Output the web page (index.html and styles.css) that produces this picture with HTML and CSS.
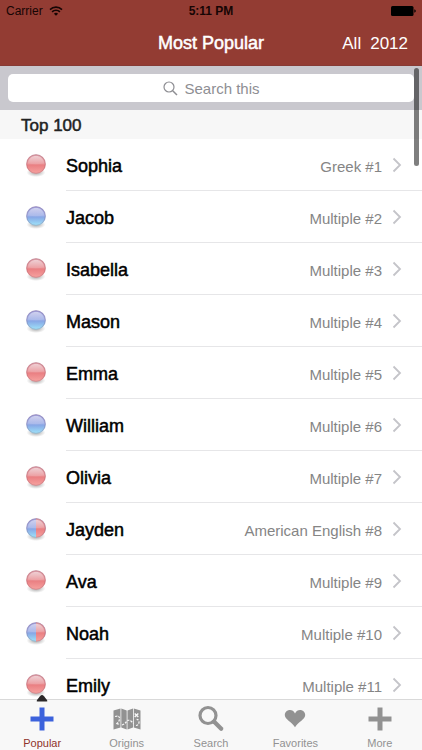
FILE: index.html
```html
<!DOCTYPE html>
<html lang="en">
<head>
<meta charset="utf-8">
<meta name="viewport" content="width=device-width, initial-scale=1">
<title>Most Popular</title>
<link rel="stylesheet" href="styles.css">
</head>
<body>
<svg class="defs" aria-hidden="true">
  <defs>
    <linearGradient id="pink" x1="0" y1="0" x2="0" y2="1">
      <stop offset="0" stop-color="#dda0aa"/><stop offset=".48" stop-color="#ea9498"/>
      <stop offset=".56" stop-color="#ea8083"/><stop offset="1" stop-color="#f7a3a0"/>
    </linearGradient>
    <linearGradient id="blue" x1="0" y1="0" x2="0" y2="1">
      <stop offset="0" stop-color="#a0a0dc"/><stop offset=".48" stop-color="#9fb0e8"/>
      <stop offset=".56" stop-color="#88a8e6"/><stop offset="1" stop-color="#9fe6fa"/>
    </linearGradient>
    <linearGradient id="shine" x1="0" y1="0" x2="0" y2="1">
      <stop offset="0" stop-color="#fff" stop-opacity=".5"/><stop offset="1" stop-color="#fff" stop-opacity=".1"/>
    </linearGradient>
    <radialGradient id="shade">
      <stop offset="0" stop-color="#555" stop-opacity=".6"/><stop offset="1" stop-color="#777" stop-opacity="0"/>
    </radialGradient>
    <g id="gloss">
      <circle cx="12" cy="12" r="9.300" fill="none" stroke="#8a5870" stroke-opacity=".28"/>
      <path d="M4 11.500C4 1.500 20 1.500 20 11.500Q12 13 4 11.500Z" fill="url(#shine)"/>
    </g>
    <symbol id="girl" viewBox="0 0 24 26">
      <ellipse cx="12" cy="20.500" rx="9.500" ry="4.500" fill="url(#shade)"/>
      <circle cx="12" cy="12" r="9.800" fill="url(#pink)"/><use href="#gloss"/>
    </symbol>
    <symbol id="boy" viewBox="0 0 24 26">
      <ellipse cx="12" cy="20.500" rx="9.500" ry="4.500" fill="url(#shade)"/>
      <circle cx="12" cy="12" r="9.800" fill="url(#blue)"/><use href="#gloss"/>
    </symbol>
    <symbol id="both" viewBox="0 0 24 26">
      <ellipse cx="12" cy="20.500" rx="9.500" ry="4.500" fill="url(#shade)"/>
      <circle cx="12" cy="12" r="9.800" fill="url(#blue)"/>
      <path d="M12 2.200a9.800 9.800 0 0 1 0 19.600Z" fill="url(#pink)"/><use href="#gloss"/>
    </symbol>
    <symbol id="chevron" viewBox="0 0 10 16"><path d="M1.500 1.500 8 8l-6.500 6.500" fill="none" stroke="#c4c4c9" stroke-width="1.800"/></symbol>
    <symbol id="plus" viewBox="0 0 24 24"><path d="M9.500.500h5v9h9v5h-9v9h-5v-9h-9v-5h9Z" fill="currentColor"/></symbol>
  </defs>
</svg>

<header class="top">
  <div class="status">
    <span class="carrier">Carrier
      <svg width="14" height="10" viewBox="0 0 14 10" fill="none" stroke="#160504" stroke-width="1.600"><path d="M1 3.600a8.600 8.600 0 0 1 12 0M3.100 5.900a5.600 5.600 0 0 1 7.800 0"/><path d="M7 9.800 4.900 7.700a3 3 0 0 1 4.200 0Z" fill="#160504" stroke="none"/></svg>
    </span>
    <span class="clock">5:11 PM</span>
    <svg class="battery" width="25" height="10" viewBox="0 0 25 10"><rect width="22.500" height="10" rx="1.500"/><path d="M23.300 3.300q1.500.4 1.500 1.700t-1.500 1.700Z"/></svg>
  </div>
  <div class="nav">
    <h1>Most Popular</h1>
    <div class="actions"><button type="button">All</button><button type="button">2012</button></div>
  </div>
</header>

<main class="content">
  <div class="scroller">
    <form class="search" role="search">
      <input type="text" placeholder="Search this" aria-label="Search this">
      <svg class="lens" width="15" height="15" viewBox="0 0 15 15" fill="none" stroke="#8e8e93" stroke-width="1.200"><circle cx="6" cy="6" r="5"/><path d="m9.700 9.700 4.300 4.300" stroke-width="1.500"/></svg>
    </form>
    <h2>Top 100</h2>
    <ul class="names">
      <li><a href="#sophia"><svg class="ball"><use href="#girl"/></svg><span class="row"><span class="text"><b>Sophia</b><span>Greek #1</span></span><svg class="chevron"><use href="#chevron"/></svg></span></a></li>
      <li><a href="#jacob"><svg class="ball"><use href="#boy"/></svg><span class="row"><span class="text"><b>Jacob</b><span>Multiple #2</span></span><svg class="chevron"><use href="#chevron"/></svg></span></a></li>
      <li><a href="#isabella"><svg class="ball"><use href="#girl"/></svg><span class="row"><span class="text"><b>Isabella</b><span>Multiple #3</span></span><svg class="chevron"><use href="#chevron"/></svg></span></a></li>
      <li><a href="#mason"><svg class="ball"><use href="#boy"/></svg><span class="row"><span class="text"><b>Mason</b><span>Multiple #4</span></span><svg class="chevron"><use href="#chevron"/></svg></span></a></li>
      <li><a href="#emma"><svg class="ball"><use href="#girl"/></svg><span class="row"><span class="text"><b>Emma</b><span>Multiple #5</span></span><svg class="chevron"><use href="#chevron"/></svg></span></a></li>
      <li><a href="#william"><svg class="ball"><use href="#boy"/></svg><span class="row"><span class="text"><b>William</b><span>Multiple #6</span></span><svg class="chevron"><use href="#chevron"/></svg></span></a></li>
      <li><a href="#olivia"><svg class="ball"><use href="#girl"/></svg><span class="row"><span class="text"><b>Olivia</b><span>Multiple #7</span></span><svg class="chevron"><use href="#chevron"/></svg></span></a></li>
      <li><a href="#jayden"><svg class="ball"><use href="#both"/></svg><span class="row"><span class="text"><b>Jayden</b><span>American English #8</span></span><svg class="chevron"><use href="#chevron"/></svg></span></a></li>
      <li><a href="#ava"><svg class="ball"><use href="#girl"/></svg><span class="row"><span class="text"><b>Ava</b><span>Multiple #9</span></span><svg class="chevron"><use href="#chevron"/></svg></span></a></li>
      <li><a href="#noah"><svg class="ball"><use href="#both"/></svg><span class="row"><span class="text"><b>Noah</b><span>Multiple #10</span></span><svg class="chevron"><use href="#chevron"/></svg></span></a></li>
      <li><a href="#emily"><svg class="ball"><use href="#girl"/></svg><span class="row"><span class="text"><b>Emily</b><span>Multiple #11</span></span><svg class="chevron"><use href="#chevron"/></svg></span></a></li>
    </ul>
  </div>
  <div class="thumb"></div>
</main>

<nav class="tabs">
  <a class="tab active" href="#popular"><svg class="pointer" width="12" height="7" viewBox="0 0 12 7"><path d="M6 0Q7 0 8 1.200L11 5q1 1.500-.5 1.500h-9Q0 6.500 1 5l3-3.800Q5 0 6 0Z" fill="#2b2829"/></svg><svg class="icon"><use href="#plus"/></svg>Popular</a>
  <a class="tab" href="#origins"><svg class="icon map" viewBox="0 0 28 24"><path d="M.5 3.500 7.500 1.500v19L.5 22.500ZM8.300 1.500l5.400 2v19l-5.400-2ZM14.500 3.500l5.500-2v19l-5.500 2ZM20.800 1.500l6.700 2v19l-6.700-2Z" fill="currentColor"/><path d="M2 9.500q4.500-1.500 4.500 2T3 17h4M9 18q3-1 4.500-3.500t5 0l2 2M23 18.500q3-.5 3-3.500t-3.500-2.500" fill="none" stroke="#f8f8f8" stroke-width="1.200" stroke-dasharray="2.200 1.200"/><path d="m21.700 6.500 3.600 3.600m0-3.600-3.600 3.600" stroke="#f8f8f8" stroke-width="1.400"/></svg>Origins</a>
  <a class="tab" href="#search"><svg class="icon" viewBox="0 0 24 24" fill="none" stroke="currentColor"><circle cx="9" cy="8.500" r="8" stroke-width="3.200"/><path d="m15.200 14.700 7 7" stroke-width="4.200" stroke-linecap="round"/></svg>Search</a>
  <a class="tab" href="#favorites"><svg class="icon" viewBox="0 0 24 24"><path d="M12 6.500C13 4 15 3 17 3c3 0 5.200 2.200 5.200 5 0 4.500-6.700 6.500-10.200 12.200C8.500 14.500 1.800 12.500 1.800 8 1.800 5.200 4 3 7 3c2 0 4 1 5 3.500Z" fill="currentColor"/></svg>Favorites</a>
  <a class="tab" href="#more"><svg class="icon"><use href="#plus"/></svg>More</a>
</nav>
</body>
</html>
```
FILE: styles.css
```css
* { box-sizing: border-box; }

body {
  display: flex;
  flex-direction: column;
  height: 100vh;
  margin: 0;
  background: #fff;
  color: #000;
  font-family: "Liberation Sans", Arial, sans-serif;
}

a { color: inherit; text-decoration: none; }
svg { overflow: visible; }
.defs { position: absolute; width: 0; height: 0; }

.top { background: #933c33; height: 66px; border-bottom: 1px solid #873b35; }

.status {
  display: grid;
  grid-template-columns: 1fr auto 1fr;
  align-items: center;
  height: 22px;
  padding: 0 6px;
  font-size: 12px;
  color: #160504;
}
.carrier { display: flex; align-items: center; gap: 6px; }
.clock { font-weight: bold; }
.battery { justify-self: end; }

.nav {
  display: grid;
  grid-template-columns: 1fr auto 1fr;
  align-items: center;
  height: 43px;
  padding: 0 14px;
  color: #fff;
}
.nav h1 {
  grid-column: 2;
  margin: 0;
  font-size: 18px;
  font-weight: normal;
  -webkit-text-stroke: 0.5px;
}
.actions { display: flex; justify-content: flex-end; gap: 9px; }
.actions button {
  padding: 0;
  border: 0;
  background: none;
  color: inherit;
  font: inherit;
  font-size: 17px;
}

.content { position: relative; flex: 1; min-height: 0; }
.scroller { height: 100%; overflow-y: auto; scrollbar-width: none; }
.thumb {
  position: absolute;
  top: 2px;
  right: 3px;
  width: 5px;
  height: 98px;
  border-radius: 3px;
  background: rgba(0, 0, 0, 0.5);
}

.search { position: relative; padding: 8px; background: #c9c8ce; }
.search input {
  display: block;
  width: 100%;
  height: 28px;
  padding: 0 0 0 22px;
  border: 0;
  border-radius: 5px;
  background: #fff;
  font: 15px "Liberation Sans", Arial, sans-serif;
  text-align: center;
}
.search input::placeholder { color: #8e8e93; }
.lens { position: absolute; left: calc(50% - 48px); top: 15px; }

h2 {
  margin: 0;
  padding: 0 21px;
  background: #f7f7f7;
  color: #222;
  font-size: 17px;
  font-weight: normal;
  line-height: 32px;
  height: 29px;
  -webkit-text-stroke: 0.5px;
}

.names { margin: 0; padding: 0; list-style: none; }
.names a { display: flex; align-items: center; height: 52px; padding-left: 24px; }
.ball { width: 24px; height: 26px; margin-right: 18px; }
.row {
  display: flex;
  flex: 1;
  align-items: center;
  gap: 10px;
  height: 100%;
  padding-right: 20px;
  border-bottom: 1px solid #e6e6e8;
}
.text {
  display: flex;
  flex: 1;
  align-items: baseline;
  justify-content: space-between;
  padding-top: 4px;
  color: #858585;
  font-size: 15px;
}
.text b {
  color: #000;
  font-size: 18px;
  font-weight: normal;
  -webkit-text-stroke: 0.5px;
}
.chevron { width: 10px; height: 16px; }

.tabs {
  position: relative;
  display: grid;
  grid-template-columns: repeat(5, 1fr);
  height: 51px;
  border-top: 1px solid #d9d9d9;
  background: #f8f8f8;
}
.tab {
  position: relative;
  display: flex;
  flex-direction: column;
  align-items: center;
  gap: 6px;
  padding-top: 7px;
  color: #929292;
  font-size: 11px;
  line-height: 13px;
}
.active { color: #8f332b; }
.icon { width: 24px; height: 24px; }
.map { width: 28px; }
.active .icon { color: #3c62dc; }
.pointer { position: absolute; top: -5px; left: calc(50% - 6px); }
```
